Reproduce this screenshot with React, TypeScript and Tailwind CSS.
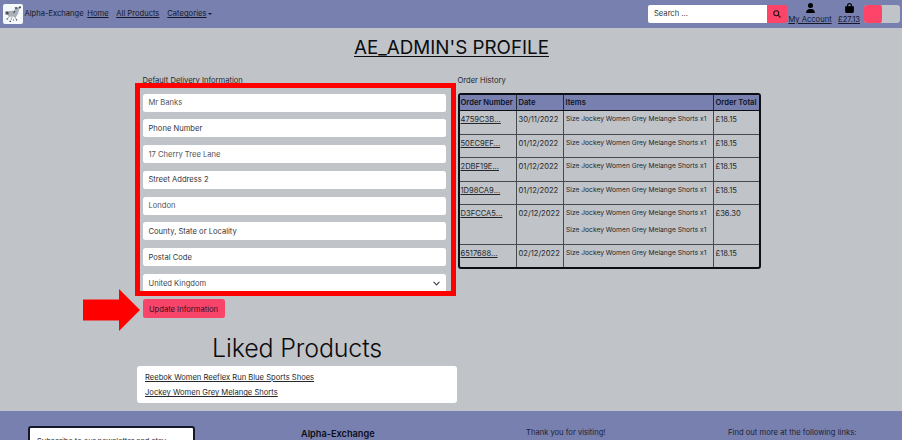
import type { ReactNode } from 'react';

const fields = [
  { text: 'Mr Banks', filled: true },
  { text: 'Phone Number', filled: false },
  { text: '17 Cherry Tree Lane', filled: true },
  { text: 'Street Address 2', filled: false },
  { text: 'London', filled: true },
  { text: 'County, State or Locality', filled: false },
  { text: 'Postal Code', filled: false },
];

const item = 'Size Jockey Women Grey Melange Shorts x1';

const orders = [
  { id: '4759C3B...', date: '30/11/2022', items: [item], total: '£18.15', h: 'h-[24px]' },
  { id: '50EC9EF...', date: '01/12/2022', items: [item], total: '£18.15', h: 'h-[23px]' },
  { id: '2DBF19E...', date: '01/12/2022', items: [item], total: '£18.15', h: 'h-[24px]' },
  { id: '1D98CA9...', date: '01/12/2022', items: [item], total: '£18.15', h: 'h-[23px]' },
  { id: 'D3FCCA5...', date: '02/12/2022', items: [item, item], total: '£36.30', h: 'h-[40px]' },
  { id: '6517688...', date: '02/12/2022', items: [item], total: '£18.15', h: 'h-[22px]' },
];

function Link({ children, className = '' }: { children: ReactNode; className?: string }) {
  return <a className={`underline ${className}`}>{children}</a>;
}

function Logo() {
  return (
    <svg viewBox="0 0 20 20" className="h-5 w-5">
      <rect width="20" height="20" rx="2" fill="#f6f9fc" />
      <path d="M3 8 7 7l4-.5L13.500 3.500l4-1-1.500 3.500-1 4-2.500 3.500-3-1-3 .5-2-2z" fill="#a9b1b7" />
      <path d="M2.500 7.500h3v3h-3z M11.500 3.500l2-.5 1 1.500-2 .8z M16 2.500h2v1.800h-2z" fill="#4a5156" />
      <path d="M6 12.500 4.500 15M9 13l-1 3M12 13l1.500 3" stroke="#8a939a" strokeWidth="0.8" fill="none" />
      <path d="M3.500 15h1.500M6.500 17.300h1.500M10 16h1M13 15.800h1.200M10.500 9l1.500-2" stroke="#454b50" strokeWidth="1.200" fill="none" />
    </svg>
  );
}

function Navbar() {
  return (
    <nav className="flex h-7 items-center bg-[#7780af] pr-[2px] pl-[2.500px] text-[7.6px] text-[#15182a]">
      <Logo />
      <span className="ml-[2px] w-[62.800px]">Alpha-Exchange</span>
      <Link className="w-[29px]">Home</Link>
      <Link className="w-[51px]">All Products</Link>
      <Link>Categories</Link>
      <span className="ml-[2px] border-x-[2px] border-t-[2px] border-x-transparent border-t-[#15182a]" />
      <div className="ml-auto flex h-[18px] w-[139px] overflow-hidden rounded-[2px]">
        <div className="flex flex-1 items-center bg-white pl-[6px] text-[#333]">Search ...</div>
        <div className="flex w-5 items-center justify-center bg-[#ff4469]">
          <svg viewBox="0 0 16 16" className="h-2 w-2" fill="none" stroke="#25121c" strokeWidth="2.200">
            <circle cx="6.500" cy="6.500" r="5" />
            <path d="m10.500 10.500 4.500 4.500" />
          </svg>
        </div>
      </div>
      <div className="ml-[1.500px] flex w-[43px] flex-col items-center">
        <svg viewBox="0 0 448 512" className="h-[10px] w-[9px]" fill="#000">
          <path d="M224 256a128 128 0 1 0 0-256 128 128 0 1 0 0 256zm-45.700 48C79.800 304 0 383.800 0 482.300 0 498.700 13.300 512 29.700 512h388.600c16.400 0 29.700-13.300 29.700-29.700C448 383.800 368.200 304 269.700 304z" />
        </svg>
        <Link className="mt-px leading-[11px] whitespace-nowrap">My Account</Link>
      </div>
      <div className="ml-[6px] flex w-[23px] flex-col items-center">
        <svg viewBox="0 0 448 512" className="h-[10px] w-[9px]" fill="#000">
          <path d="M352 160v-32C352 57.400 294.600 0 224 0S96 57.400 96 128v32H0v272c0 44.200 35.800 80 80 80h288c44.200 0 80-35.800 80-80V160h-96zm-192-32c0-35.300 28.700-64 64-64s64 28.700 64 64v32H160z" />
        </svg>
        <Link className="mt-px leading-[11px]">£27.13</Link>
      </div>
      <div className="ml-[3.500px] flex h-[18px] w-9 overflow-hidden rounded-[3px] bg-[#c0c4c8]">
        <div className="w-[18px] rounded-[2px] bg-[#ff4469]" />
      </div>
    </nav>
  );
}

function DeliveryForm() {
  return (
    <section className="relative w-[304px]">
      <p className="h-[18.500px] pt-px pl-[0.500px] text-[7.600px] leading-[10px]">Default Delivery Information</p>
      <div className="ml-[0.500px] flex flex-col gap-[7.800px]">
        {fields.map((f) => (
          <div
            key={f.text}
            className={`flex h-[18px] items-center rounded-[2.500px] bg-white pt-[0.500px] pl-[6px] text-[7.600px] ${f.filled ? 'text-[#4f5459]' : 'text-[#33363a]'}`}
          >
            {f.text}
          </div>
        ))}
        <div className="flex h-[18px] items-center justify-between rounded-[2.500px] bg-white pt-[0.500px] pr-[6px] pl-[6px] text-[7.600px] text-[#44484d]">
          United Kingdom
          <svg viewBox="0 0 16 16" className="h-[7px] w-[7px]" fill="none" stroke="#343a40" strokeWidth="2.500" strokeLinecap="round" strokeLinejoin="round">
            <path d="m2 5 6 6 6-6" />
          </svg>
        </div>
      </div>
      <button className="mt-[7px] ml-[0.500px] block h-[18.500px] w-[82px] rounded-[2.500px] bg-[#f94469] pt-[2px] text-[7.600px] text-[#35101f]">
        Update Information
      </button>
      <div className="absolute top-[8px] left-[-7px] h-[213px] w-[321px] border-5 border-[#fe0000]" />
      <svg viewBox="0 0 57 42" className="absolute top-[214px] left-[-59px] h-[42px] w-[57px]" fill="#fe0000">
        <path d="M0 10.500h36V0l21 21-21 21V31.500H0z" />
      </svg>
    </section>
  );
}

function OrderHistory() {
  return (
    <section className="ml-[11.500px] w-[304px]">
      <p className="h-[18px] pt-px text-[7.600px] leading-[10px]">Order History</p>
      <div className="w-[303.400px] overflow-hidden rounded-[3px] border-2 border-[#0c0e14] text-[7.600px]">
        <div className="grid h-[16px] grid-cols-[57px_47px_150px_1fr] divide-x divide-[#252936] border-b border-[#0c0e14] bg-[#7780af] font-semibold text-[#10131f] [&>*]:flex [&>*]:items-center [&>*]:pt-px [&>*]:pl-[2px]">
          <span className="-indent-px whitespace-nowrap">Order Number</span>
          <span>Date</span>
          <span>Items</span>
          <span className="whitespace-nowrap">Order Total</span>
        </div>
        {orders.map((o) => (
          <div
            key={o.id}
            className={`grid grid-cols-[57px_47px_150px_1fr] divide-x divide-[#454950] border-b border-[#454950] leading-[10px] last:border-b-0 [&>*]:pt-[4px] [&>*]:pl-[2px] ${o.h}`}
          >
            <Link className="-indent-px">{o.id}</Link>
            <span>{o.date}</span>
            <div className="text-[6.700px] whitespace-nowrap">
              {o.items.map((text, i) => (
                <p key={i} className="mb-[7.500px] indent-[0.500px] leading-[9.500px]">{text}</p>
              ))}
            </div>
            <span>{o.total}</span>
          </div>
        ))}
      </div>
    </section>
  );
}

function Footer() {
  return (
    <footer className="mt-[8px] flex h-[29px] overflow-hidden bg-[#7780af] text-[7.600px] text-[#1b1f34]">
      <div className="mt-[15px] ml-[27.500px] h-20 w-[167px] rounded-[3px] border-2 border-[#141727] bg-white pt-[8.500px] pl-[7.500px] leading-[10px] tracking-[-0.060px] whitespace-nowrap text-[#333]">
        Subscribe to our newsletter and stay
      </div>
      <h3 className="mt-[16px] ml-[106.500px] w-[225px] text-[9.200px] leading-[13px] font-semibold text-[#0c0e18]">Alpha-Exchange</h3>
      <p className="mt-[16px] w-[202px] leading-[11px]">Thank you for visiting!</p>
      <p className="mt-[16px] leading-[11px] tracking-[0.030px] whitespace-nowrap">Find out more at the following links:</p>
    </footer>
  );
}

export default function App() {
  return (
    <div className="h-[440px] w-[902px] overflow-hidden bg-[#c0c4c9] font-[Inter,sans-serif] text-[#24272b]">
      <Navbar />
      <main>
        <h1 className="h-[47px] pt-[8px] pl-px text-center text-[18.800px] leading-[24px] text-[#0b0c0e] underline decoration-1 underline-offset-2">
          AE_ADMIN&apos;S PROFILE
        </h1>
        <div className="flex h-[256px] pl-[142px]">
          <DeliveryForm />
          <OrderHistory />
        </div>
        <h2 className="ml-[137px] h-[35px] w-[320px] pt-px text-center text-[25px] leading-[33px] font-light tracking-[-0.150px] text-[#0b0c0e]">Liked Products</h2>
        <div className="ml-[137px] flex h-[37px] w-[320px] flex-col rounded-[3px] bg-white pt-[4px] pl-[8px] text-[7.600px] leading-[15.200px]">
          <Link>Reebok Women Reeflex Run Blue Sports Shoes</Link>
          <Link>Jockey Women Grey Melange Shorts</Link>
        </div>
      </main>
      <Footer />
    </div>
  );
}
